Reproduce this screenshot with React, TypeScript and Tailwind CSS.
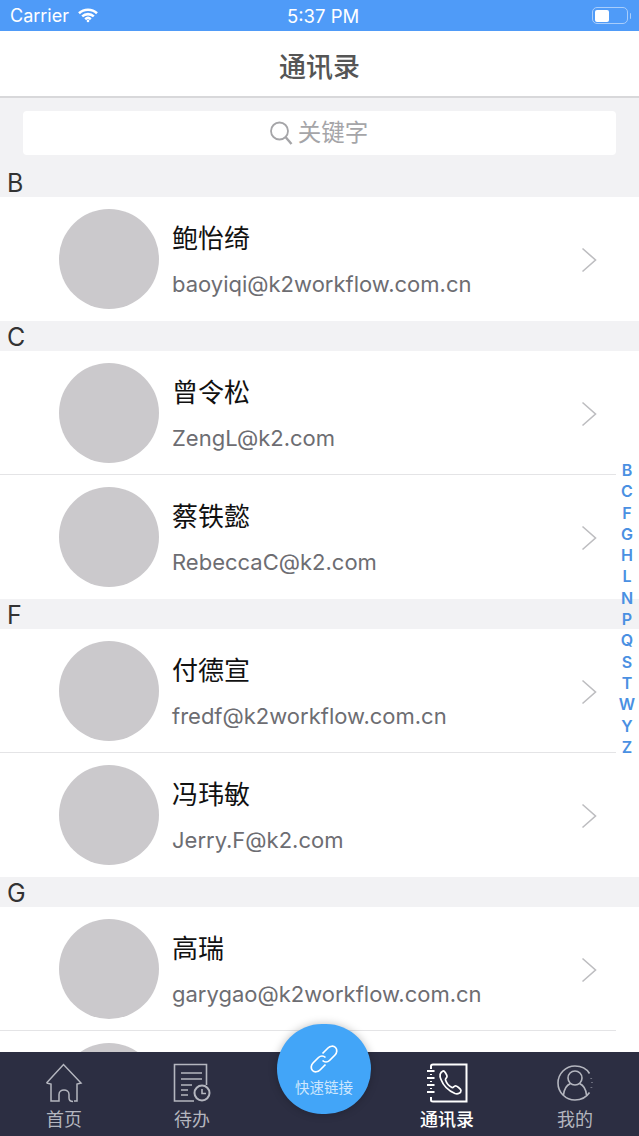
import React from "react";

const FONT = 'Inter, "Noto Sans CJK SC", sans-serif';

interface Contact {
  name: string;
  email: string;
}

const SECTIONS: { letter: string; contacts: Contact[] }[] = [
  { letter: "B", contacts: [{ name: "鲍怡绮", email: "baoyiqi@k2workflow.com.cn" }] },
  {
    letter: "C",
    contacts: [
      { name: "曾令松", email: "ZengL@k2.com" },
      { name: "蔡铁懿", email: "RebeccaC@k2.com" },
    ],
  },
  {
    letter: "F",
    contacts: [
      { name: "付德宣", email: "fredf@k2workflow.com.cn" },
      { name: "冯玮敏", email: "Jerry.F@k2.com" },
    ],
  },
  {
    letter: "G",
    contacts: [
      { name: "高瑞", email: "garygao@k2workflow.com.cn" },
      { name: "", email: "" },
    ],
  },
];

const INDEX = ["B", "C", "F", "G", "H", "L", "N", "P", "Q", "S", "T", "W", "Y", "Z"];

function StatusBar() {
  return (
    <div className="relative flex h-[31px] shrink-0 items-center justify-between bg-[#4f9bf8] pl-[10px] pr-[8px] text-white">
      <div className="flex items-center gap-[9px]">
        <span className="text-[18px] leading-none">Carrier</span>
        <svg width="20" height="15" viewBox="0 0 20 15" fill="none" stroke="white" strokeWidth="2.6">
          <path d="M1 5.2C6 .6 14 .6 19 5.2" />
          <path d="M4.2 8.400C7.400 5.400 12.600 5.400 15.800 8.400" />
          <path d="M7.200 11.200C8.800 9.800 11.200 9.800 12.800 11.200" />
          <circle cx="10" cy="13" r="1.300" fill="white" stroke="none" />
        </svg>
      </div>
      <span className="absolute left-[287px] top-[6px] text-[18.500px] leading-[20px]">5:37 PM</span>
      <div className="flex items-center gap-[1.500px]">
        <div className="flex h-[17px] w-[36px] items-center rounded-[5px] border border-[#a8cdfb] p-[2px]">
          <div className="h-[12px] w-[14px] rounded-[2px] bg-white" />
        </div>
        <div className="h-[6px] w-[1.500px] rounded-r bg-[#a8cdfb]" />
      </div>
    </div>
  );
}

function Chevron() {
  return (
    <svg width="16" height="26" viewBox="0 0 16 26" fill="none" stroke="#bdbdc0" strokeWidth="1.600" className="shrink-0">
      <path d="M1.500 1.500L14.500 13L1.500 24.500" />
    </svg>
  );
}

function ContactRow({ contact, last }: { contact: Contact; last: boolean }) {
  return (
    <div className="h-[124px] bg-white pl-[59px] pt-[12px]">
      <div className="flex h-[111px] items-start">
        <div className="h-[100px] w-[100px] shrink-0 rounded-full bg-[#cbc9cc]" />
        <div className="ml-[13px] flex-1">
          <div className="mt-[12.500px] h-[34px] text-[26px] leading-[34px] text-[#111]">{contact.name}</div>
          <div className="mt-[15px] h-[26px] text-[22px] leading-[26px] text-[#6d6d72]">{contact.email}</div>
        </div>
        <div className="mr-[42px] mt-[38px]">
          <Chevron />
        </div>
      </div>
      {!last && <div className="mr-[23px] -ml-[59px] h-px bg-[#e4e4e6]" />}
    </div>
  );
}

function HomeIcon() {
  return (
    <svg width="38" height="40" viewBox="0 0 38 40" fill="none" stroke="#b4b6bf" strokeWidth="1.500">
      <path d="M1.500 20L18.500 1.500L36 20L32 21V38H29M1.500 20L6 21V38H14V31.500C14 25.500 24 25.500 24 31.500V35C24 37.500 26 38.500 28 38.500" />
    </svg>
  );
}

function TodoIcon() {
  return (
    <svg width="38" height="40" viewBox="0 0 38 40" fill="none" stroke="#b4b6bf" strokeWidth="1.600">
      <path d="M21 38H1.500V1.500H33.500V22" />
      <path d="M8 10H29M8 16H29M8 22H19M8 27H15M8 32H15" />
      <circle cx="29" cy="30" r="7.500" strokeWidth="2" />
      <path d="M29 26V30.500H33" />
    </svg>
  );
}

function BookIcon() {
  return (
    <svg width="42" height="40" viewBox="0 0 42 40" fill="none" stroke="white" strokeWidth="2">
      <path d="M5 6V3C5 2 6 1.500 7 1.500H40.500V38.500H7C6 38.500 5 38 5 37V34" />
      <path d="M1 8H8.500M1 15H8.500M1 22H8.500M1 29H8.500" />
      <path d="M5 11V12M5 18V19M5 25V26" />
      <path strokeWidth="1.700" d="M17 8C14 9.500 13.500 13 15 16.500C17.500 23 23 28 29 30.500C32 31.500 35 30 35 27.500C35 26 30.500 22.500 29 23C27.500 23.500 27.500 25 26 24.500C23 23 20.500 20 19.500 17C19 15.500 21 15 21 13.500C21 12 18.500 7.500 17 8Z" />
    </svg>
  );
}

function UserIcon() {
  return (
    <svg width="36" height="36" viewBox="0 0 36 36" fill="none" stroke="#b4b6bf" strokeWidth="1.600">
      <path d="M32.500 8.500C29.500 3.500 24 1 18 1C8.600 1 1 8.600 1 18C1 27.400 8.600 35 18 35C24 35 29.500 32 32.500 27.500" />
      <path d="M34.200 13V13.600M35 17.500V18.100M34.400 22V22.600" strokeWidth="1.800" />
      <circle cx="18" cy="13" r="7" />
      <path d="M13.500 18.500C9 20.500 7 24.500 6.500 30M22.500 18.500C27 20.500 29 24.500 29.500 30" />
    </svg>
  );
}

function LinkIcon() {
  return (
    <svg width="30" height="30" viewBox="0 0 30 30" fill="none" stroke="white" strokeWidth="1.700">
      <path d="M13.500 9.500L19 4C21 2 24.500 1.500 26.500 3.500C28.500 5.500 28 9 26 11L20.500 16.500C18.500 18.500 15.500 18.500 13.500 16.500" />
      <path d="M16.500 20.500L11 26C9 28 5.500 28.500 3.500 26.500C1.500 24.500 2 21 4 19L9.500 13.500C11.500 11.500 14.500 11.500 16.500 13.500" />
    </svg>
  );
}

function TabItem({ label, active, children }: { label: string; active?: boolean; children: React.ReactNode }) {
  return (
    <div className="flex w-[128px] flex-col items-center">
      <div className="flex h-[40px] items-center justify-center">{children}</div>
      <span className={`mt-[6px] text-[18px] leading-[22px] ${active ? "font-medium text-white" : "text-[#b4b6bf]"}`}>{label}</span>
    </div>
  );
}

function TabBar() {
  return (
    <div className="relative flex h-[84px] shrink-0 items-start justify-between bg-[#2c2e42] pt-[11px]">
      <TabItem label="首页">
        <HomeIcon />
      </TabItem>
      <TabItem label="待办">
        <TodoIcon />
      </TabItem>
      <div className="w-[127px]" />
      <TabItem label="通讯录" active>
        <BookIcon />
      </TabItem>
      <TabItem label="我的">
        <UserIcon />
      </TabItem>
      <div className="absolute left-[277px] top-[-28px] flex h-[90px] w-[94px] flex-col items-center rounded-full bg-[#42a5f8] pt-[20px] shadow-[0_0_8px_rgba(0,0,0,0.25)]">
        <LinkIcon />
        <span className="mt-[6px] text-[14.500px] leading-[16px] text-[#cfe7fd]">快速链接</span>
      </div>
    </div>
  );
}

export default function App() {
  return (
    <div className="relative flex h-[1136px] w-[639px] flex-col overflow-hidden bg-[#f2f2f4]" style={{ fontFamily: FONT }}>
      <StatusBar />
      <div className="flex h-[67px] shrink-0 items-center justify-center border-b-2 border-[#d8d8da] bg-white pt-[10px]">
        <h1 className="text-[27px] font-medium text-[#555]">通讯录</h1>
      </div>
      <div className="flex-1 overflow-hidden">
        <div className="px-[23px] pb-[12px] pt-[13px]">
          <div className="flex h-[44px] items-center justify-center gap-[5px] rounded-[4px] bg-white pr-[2px] text-[23.500px] text-[#a5a5a8]">
            <svg width="24" height="26" viewBox="0 0 24 26" fill="none" stroke="#a5a5a8" strokeWidth="1.800">
              <circle cx="10.500" cy="11" r="8.500" />
              <path d="M16.500 17L22.500 24" strokeWidth="2.400" />
            </svg>
            <span>关键字</span>
          </div>
        </div>
        {SECTIONS.map((section) => (
          <div key={section.letter}>
            <div className="flex h-[30px] items-center pl-[7px] pt-[3px] text-[25px] leading-none text-[#333]">{section.letter}</div>
            {section.contacts.map((contact, i) => (
              <ContactRow key={contact.email || i} contact={contact} last={i === section.contacts.length - 1} />
            ))}
          </div>
        ))}
      </div>
      <TabBar />
      <div className="absolute right-[4px] top-[460px] flex w-[16px] flex-col items-center text-[16px] font-semibold leading-[21.300px] text-[#4a90e2]">
        {INDEX.map((letter) => (
          <span key={letter}>{letter}</span>
        ))}
      </div>
    </div>
  );
}
